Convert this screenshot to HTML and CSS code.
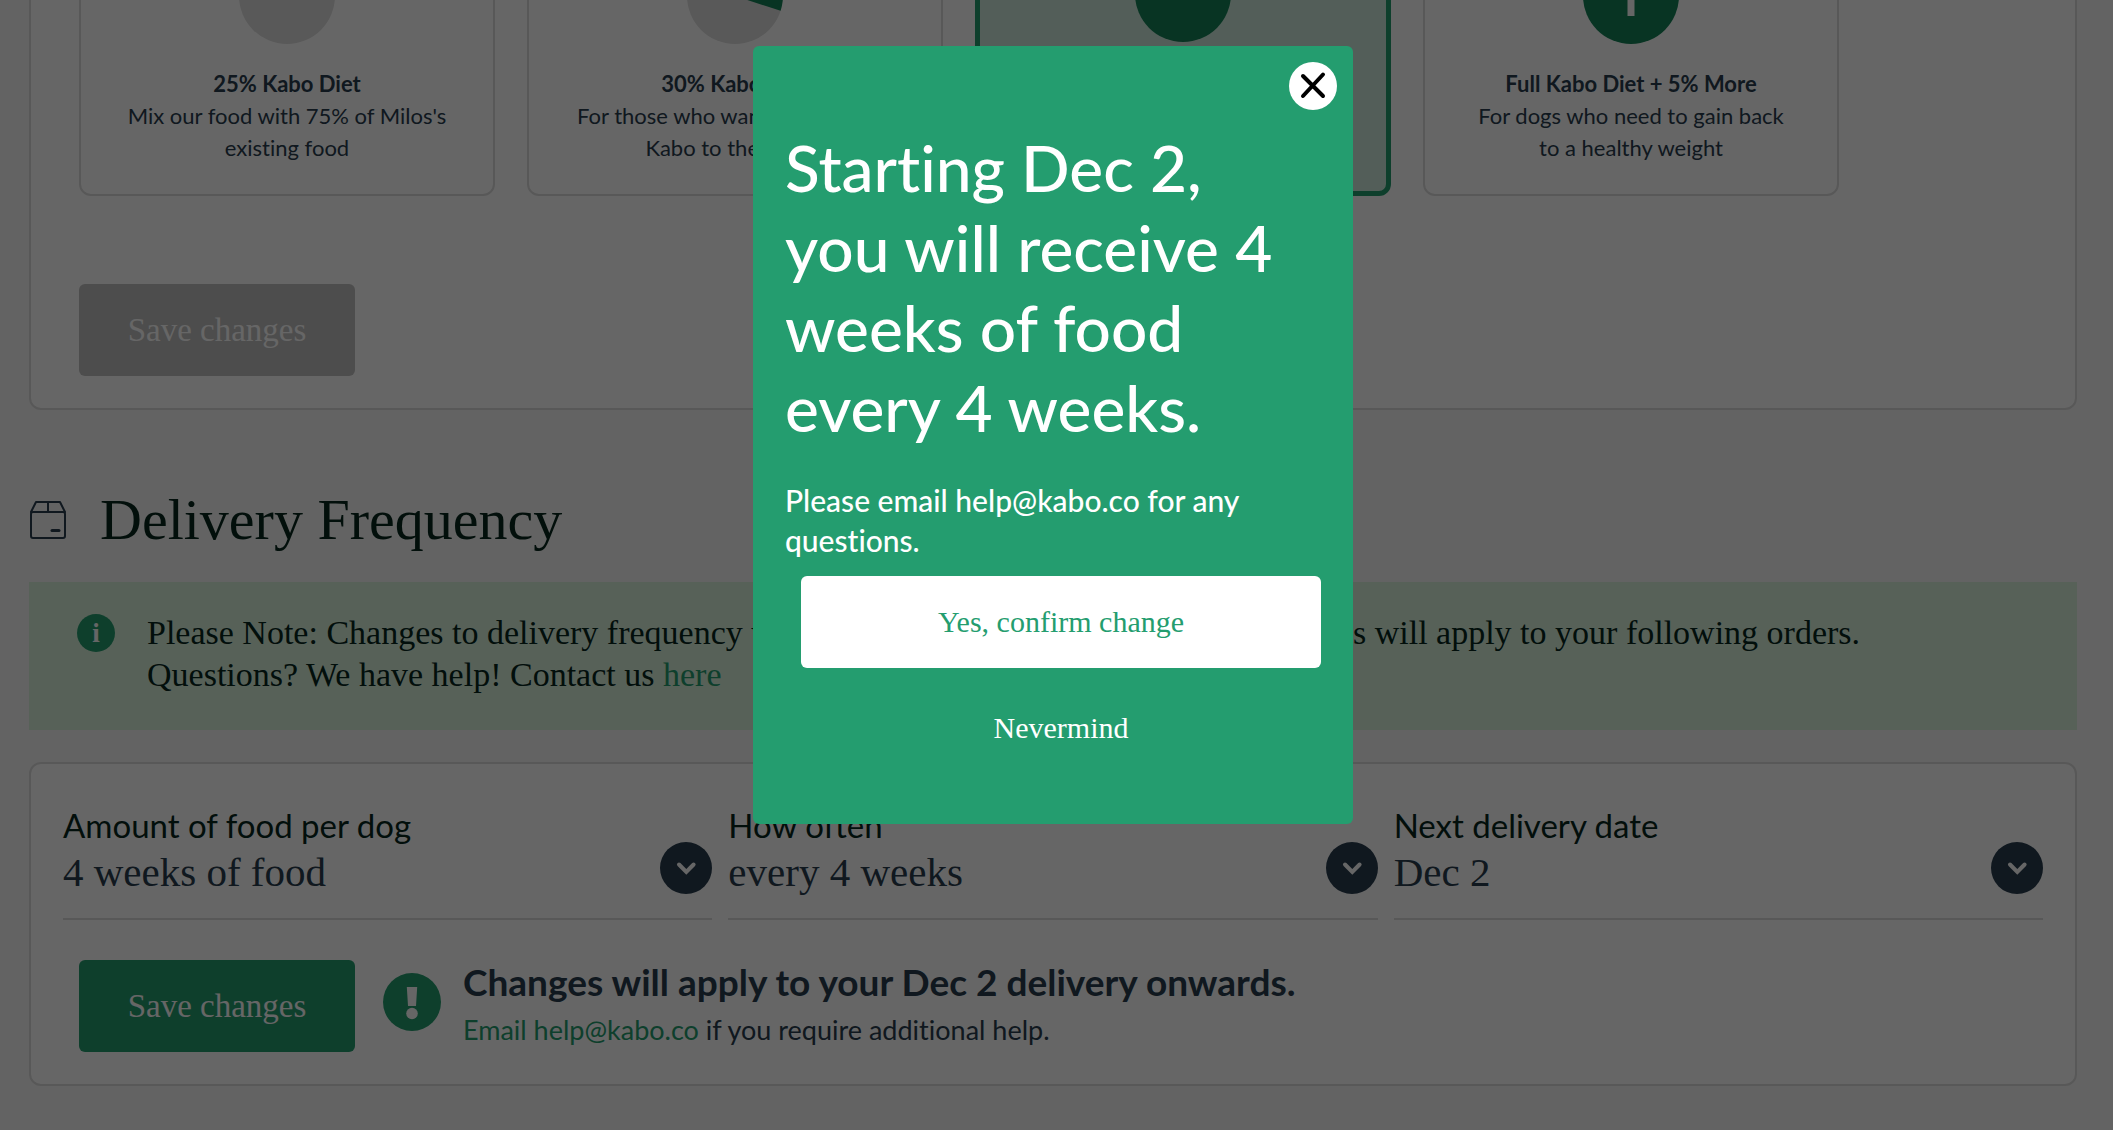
FILE: index.html
```html
<!DOCTYPE html>
<html lang="en">
  <head>
    <meta charset="UTF-8" />
    <meta name="viewport" content="width=device-width, initial-scale=1" />
    <title>Kabo - Edit Plan</title>
    <link rel="stylesheet" href="styles.css">
  </head>
  <body>
    <main class="page">
      <section class="panel panel-portions">
        <div class="portions">
          <div class="portion">
            <svg class="pie" viewBox="0 0 96 96"><circle cx="48" cy="48" r="48" fill="#dedede" /></svg>
            <h3>25% Kabo Diet</h3>
            <p>Mix our food with 75% of Milos's existing food</p>
          </div>
          <div class="portion">
            <svg class="pie" viewBox="0 0 96 96">
              <circle cx="48" cy="48" r="48" fill="#dedede" />
              <path d="M48 48V0a48 48 0 0 1 45.600 62.800z" fill="#148257" />
            </svg>
            <h3>30% Kabo Diet</h3>
            <p>For those who want to add some<br />Kabo to their bowl</p>
          </div>
          <div class="portion selected">
            <svg class="pie" viewBox="0 0 96 96"><circle cx="48" cy="46" r="48" fill="#148257" /></svg>
            <h3>Full Kabo Diet</h3>
            <p>For dogs at their ideal weight</p>
          </div>
          <div class="portion">
            <svg class="pie" viewBox="0 0 96 96">
              <circle cx="48" cy="48" r="48" fill="#148257" />
              <path d="M48 28v40M28 48h40" stroke="#fff" stroke-width="7" />
            </svg>
            <h3>Full Kabo Diet + 5% More</h3>
            <p>For dogs who need to gain back to a healthy weight</p>
          </div>
        </div>
        <button class="btn" type="button" disabled>Save changes</button>
      </section>

      <h2 class="section-title">
        <svg width="38" height="40" viewBox="0 0 38 40" fill="none" stroke="#283c4e" stroke-width="2" stroke-linejoin="round" stroke-linecap="round">
          <path d="M2 12 7 2h24l5 10M19 2v10" />
          <rect x="2" y="12" width="34" height="26" rx="2" />
          <path d="M23 30.500h7" stroke-width="3" />
        </svg>
        Delivery Frequency
      </h2>

      <div class="notice">
        <span class="info">i</span>
        <p>
          Please Note: Changes to delivery frequency will not affect any open orders. New changes will apply to your following orders.<br />
          Questions? We have help! Contact us <a href="#">here</a>
        </p>
      </div>

      <section class="panel panel-delivery">
        <div class="fields">
          <div class="field">
            <label for="amount">Amount of food per dog</label>
            <select id="amount">
              <option>4 weeks of food</option>
              <option>2 weeks of food</option>
            </select>
            <svg class="arrow" viewBox="0 0 52 52">
              <circle cx="26" cy="26" r="26" fill="#283c4e" />
              <path d="m19 22.500 7.300 7.500 7.300-7.500" fill="none" stroke="#fff" stroke-width="4" stroke-linecap="round" />
            </svg>
          </div>
          <div class="field">
            <label for="often">How often</label>
            <select id="often">
              <option>every 4 weeks</option>
              <option>every 2 weeks</option>
            </select>
            <svg class="arrow" viewBox="0 0 52 52">
              <circle cx="26" cy="26" r="26" fill="#283c4e" />
              <path d="m19 22.500 7.300 7.500 7.300-7.500" fill="none" stroke="#fff" stroke-width="4" stroke-linecap="round" />
            </svg>
          </div>
          <div class="field">
            <label for="next">Next delivery date</label>
            <select id="next">
              <option>Dec 2</option>
            </select>
            <svg class="arrow" viewBox="0 0 52 52">
              <circle cx="26" cy="26" r="26" fill="#283c4e" />
              <path d="m19 22.500 7.300 7.500 7.300-7.500" fill="none" stroke="#fff" stroke-width="4" stroke-linecap="round" />
            </svg>
          </div>
        </div>
        <div class="save-row">
          <button class="btn" type="button">Save changes</button>
          <svg class="alert" viewBox="0 0 58 58">
            <circle cx="29" cy="29" r="29" fill="#249d6f" />
            <path d="M23.800 14h10.400l-1.200 19h-8z" fill="#fff" />
            <circle cx="29" cy="40.500" r="5.800" fill="#fff" />
          </svg>
          <div class="save-note">
            <h4>Changes will apply to your Dec 2 delivery onwards.</h4>
            <p><a href="mailto:help@kabo.co">Email help@kabo.co</a> if you require additional help.</p>
          </div>
        </div>
      </section>
    </main>

    <div class="overlay">
      <div class="modal" role="dialog" aria-modal="true" aria-labelledby="modal-title">
        <button class="close" type="button" aria-label="Close">
          <svg width="48" height="48" viewBox="0 0 48 48">
            <path d="m14 14 20 20M34 12.500 14 34" stroke="#000" stroke-width="4" stroke-linecap="round" />
          </svg>
        </button>
        <h1 id="modal-title">Starting Dec 2,<br />you will receive 4 weeks of food every 4 weeks.</h1>
        <p>Please email help@kabo.co for any questions.</p>
        <div class="modal-actions">
          <button class="confirm" type="button">Yes, confirm change</button>
          <button class="nevermind" type="button">Nevermind</button>
        </div>
      </div>
    </div>
  </body>
</html>
```
FILE: styles.css
```css
* {
  box-sizing: border-box;
}
body {
  margin: 0;
  background-color: #f7f7f7;
  color: #283c4e;
  font-family: Lato, "Liberation Sans", sans-serif;
  font-variant-ligatures: none;
}
h1,
h2,
h3,
h4,
p {
  margin: 0;
}
a {
  color: #249d6f;
  text-decoration: none;
}
button {
  border: none;
  padding: 0;
  cursor: pointer;
  font-family: "Liberation Serif", serif;
}
.page {
  margin-top: -118px;
  padding: 0 36px 44px 29px;
}
.panel {
  background-color: #fff;
  border: 2px solid #dcdcdc;
  border-radius: 12px;
}
.panel-portions {
  padding: 32px 48px;
}
.portions {
  display: flex;
  gap: 32px;
  margin-bottom: 88px;
}
.portion {
  flex: 0 1 416px;
  padding: 30px 42px;
  border: 2px solid #dcdcdc;
  border-radius: 12px;
  text-align: center;
  font-size: 22px;
  line-height: 32px;
}
.portion.selected {
  padding: 27px 39px;
  border: 5px solid #249d6f;
  background-color: #d0ebde;
}
.portion h3 {
  font-size: 22px;
  font-weight: 700;
}
.pie {
  display: block;
  width: 96px;
  height: 96px;
  margin: 0 auto 24px;
}
.btn {
  width: 276px;
  height: 92px;
  border-radius: 6px;
  background-color: #249d6f;
  color: #fff;
  font-size: 33px;
}
.btn:disabled {
  background-color: #c0c0c0;
  color: #fff;
  cursor: default;
}
.section-title {
  display: flex;
  align-items: center;
  gap: 33px;
  margin: 78px 0 30px;
  color: #05261c;
  font-family: "Liberation Serif", serif;
  font-size: 58px;
  font-weight: 400;
  line-height: 64px;
}
.notice {
  display: flex;
  gap: 32px;
  margin-bottom: 32px;
  padding: 30px 48px 34px;
  background-color: #daf2dc;
  color: #05261c;
  font-family: "Liberation Serif", serif;
  font-size: 34px;
  line-height: 42px;
}
.info {
  flex: none;
  width: 38px;
  height: 38px;
  margin-top: 2px;
  border-radius: 50%;
  background-color: #249d6f;
  color: #fff;
  font-size: 27px;
  font-weight: 700;
  line-height: 38px;
  text-align: center;
}
.panel-delivery {
  padding: 40px 32px 32px;
}
.fields {
  display: grid;
  grid-template-columns: repeat(3, 1fr);
  gap: 16px;
}
.field {
  position: relative;
}
.field label {
  display: block;
  color: #05261c;
  font-size: 33px;
  line-height: 42px;
}
.field select {
  display: block;
  width: 100%;
  height: 74px;
  padding: 0 60px 20px 0;
  border: none;
  border-bottom: 2px solid #dcdcdc;
  background: none;
  appearance: none;
  color: #283c4e;
  font-family: "Liberation Serif", serif;
  font-size: 41px;
}
.arrow {
  position: absolute;
  top: 38px;
  right: 0;
  width: 52px;
  height: 52px;
  pointer-events: none;
}
.save-row {
  display: flex;
  align-items: flex-start;
  margin: 40px 16px 0;
}
.alert {
  width: 58px;
  height: 58px;
  margin: 13px 22px 0 28px;
}
.save-note h4 {
  margin-bottom: 4px;
  font-size: 37px;
  line-height: 44px;
}
.save-note p {
  font-size: 27px;
  line-height: 44px;
}
.overlay {
  position: fixed;
  inset: 0;
  display: flex;
  justify-content: center;
  align-items: flex-start;
  padding: 46px 36px 0 29px;
  background-color: rgba(0, 0, 0, 0.6);
}
.modal {
  position: relative;
  width: 600px;
  padding: 82px 32px 50px;
  border-radius: 6px;
  background-color: #249d6f;
  color: #fff;
}
.modal h1 {
  margin-bottom: 32px;
  font-size: 64px;
  font-weight: 500;
  line-height: 80px;
}
.modal p {
  font-size: 30px;
  font-weight: 500;
  line-height: 40px;
}
.close {
  position: absolute;
  top: 16px;
  right: 16px;
  width: 48px;
  height: 48px;
  border-radius: 50%;
  background-color: #fff;
}
.modal-actions {
  display: flex;
  flex-direction: column;
  gap: 14px;
  margin: 16px 0 0 16px;
}
.modal-actions button {
  height: 92px;
  border-radius: 6px;
  font-size: 30px;
}
.confirm {
  background-color: #fff;
  color: #249d6f;
}
.nevermind {
  background: none;
  color: #fff;
}
```
